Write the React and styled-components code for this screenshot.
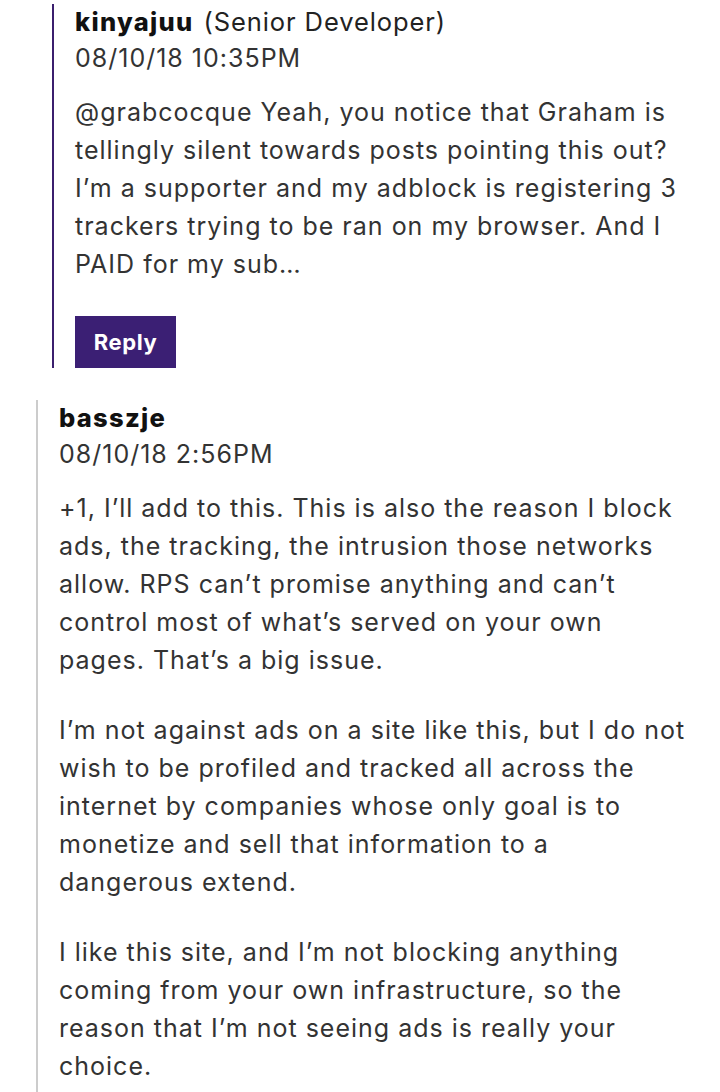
import React from 'react'
import styled, { createGlobalStyle } from 'styled-components';

let GlobalStyle = createGlobalStyle`
    body {
        margin:0;
        background:#ffffff;
        font-family: Inter, "Noto Sans", sans-serif;
    }
`;

let Page = styled.div`
    display:flex;
    flex-direction:column;
    width:720px;
    height:1092px;
    overflow:hidden;
    padding-top:4px;
    box-sizing:border-box;
`;

let Comment = styled.div`
    display:flex;
    flex-direction:column;
    align-items:flex-start;
    margin-left:${props => props.indent}px;
    margin-top:${props => props.top || 0}px;
    padding-left:21px;
    border-left:2px solid ${props => props.accent};
`;

let Header = styled.div`
    font-size:25.5px;
    line-height:36px;
    letter-spacing:0.9px;
    color:#111;
    & b {
        font-weight:800;
        letter-spacing:1.3px;
        margin-right:10px;
    }
`;

let Role = styled.span`
    font-weight:400;
    color:#222;
`;

let Stamp = styled.div`
    font-size:25px;
    line-height:36px;
    letter-spacing:1px;
    color:#333;
`;

let Body = styled.p`
    margin:${props => props.first ? 17 : 32}px 0 0 0;
    font-size:25px;
    line-height:38px;
    letter-spacing:1px;
    color:#333;
    white-space:nowrap;
`;

let ReplyButton = styled.button`
    margin-top:33px;
    width:101px;
    height:52px;
    border:none;
    background:#3b1f74;
    color:#fff;
    font-family:inherit;
    font-size:22px;
    letter-spacing:0.6px;
    font-weight:700;
    cursor:pointer;
`;

let lines = (arr) => arr.map((l, i) => <React.Fragment key={i}>{l}{i < arr.length - 1 && <br/>}</React.Fragment>)

let App = () => {
    return(
        <Page>
            <GlobalStyle/>
            <Comment indent={52} accent="#3b1f6e">
                <Header><b>kinyajuu</b><Role>(Senior Developer)</Role></Header>
                <Stamp>08/10/18 10:35PM</Stamp>
                <Body first>{lines([
                    '@grabcocque Yeah, you notice that Graham is',
                    'tellingly silent towards posts pointing this out?',
                    'I\u2019m a supporter and my adblock is registering 3',
                    'trackers trying to be ran on my browser. And I',
                    'PAID for my sub\u2026'
                ])}</Body>
                <ReplyButton>Reply</ReplyButton>
            </Comment>
            <Comment indent={36} top={32} accent="#cccccc">
                <Header><b>basszje</b></Header>
                <Stamp>08/10/18 2:56PM</Stamp>
                <Body first>{lines([
                    '+1, I\u2019ll add to this. This is also the reason I block',
                    'ads, the tracking, the intrusion those networks',
                    'allow. RPS can\u2019t promise anything and can\u2019t',
                    'control most of what\u2019s served on your own',
                    'pages. That\u2019s a big issue.'
                ])}</Body>
                <Body>{lines([
                    'I\u2019m not against ads on a site like this, but I do not',
                    'wish to be profiled and tracked all across the',
                    'internet by companies whose only goal is to',
                    'monetize and sell that information to a',
                    'dangerous extend.'
                ])}</Body>
                <Body>{lines([
                    'I like this site, and I\u2019m not blocking anything',
                    'coming from your own infrastructure, so the',
                    'reason that I\u2019m not seeing ads is really your',
                    'choice.'
                ])}</Body>
                <div style={{height: 40}}/>
            </Comment>
        </Page>
    )
}

export default App;
